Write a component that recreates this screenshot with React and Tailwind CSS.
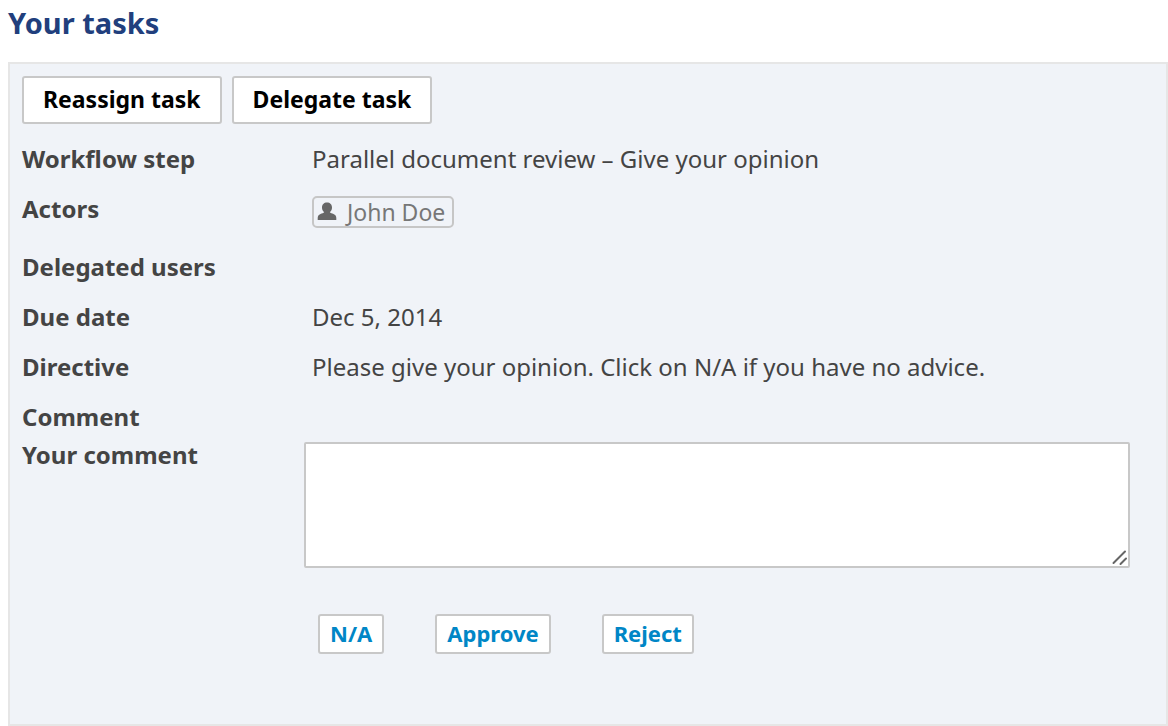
const TASK_FIELDS = [
    { label: 'Workflow step', value: 'Parallel document review – Give your opinion' },
    { label: 'Actors', user: 'John Doe' },
    { label: 'Delegated users' },
    { label: 'Due date', value: 'Dec 5, 2014' },
    { label: 'Directive', value: 'Please give your opinion. Click on N/A if you have no advice.' },
    { label: 'Comment' },
];

const TASK_ACTIONS = ['Reassign task', 'Delegate task'];

const DECISIONS = ['N/A', 'Approve', 'Reject'];

function UserIcon() {
    return (
        <svg width="20" height="20" viewBox="0 0 20 20" fill="#666666" aria-hidden="true">
            <path d="M10 .5C7 .5 5 2.600 5 5.400c0 1.900.8 3.700 2.200 4.800C6.500 11 5 11.300 3.500 11.900 1.600 12.700.7 14 .7 16v2h18.600v-2c0-2-.9-3.300-2.800-4.100-1.500-.6-3-.9-3.700-1.700C14.200 9.100 15 7.300 15 5.400 15 2.600 13 .5 10 .5z" />
        </svg>
    );
}

function UserTag({ name }) {
    return (
        <span className="inline-flex items-center gap-2.5 h-8 pl-[3px] pr-[7px] mb-0.5 border-2 border-[#c6c6c6] rounded-[5px] text-[23px] text-[#777777] align-top">
            <UserIcon />
            {name}
        </span>
    );
}

export default function App() {
    return (
        <main className="pl-2 bg-white text-[#444444] font-['Noto_Sans','Lucida_Grande',sans-serif]">
            <h1 className="pt-1 pb-5 text-[29px] leading-[38px] font-bold text-[#213f7d]">Your tasks</h1>

            <section className="border-2 border-[#e6e6e6] bg-[#f0f3f8] px-3 pt-3 pb-[70px]">
                {/* ── Task actions ── */}
                <div className="flex gap-2.5">
                    {TASK_ACTIONS.map((action) => (
                        <button
                            key={action}
                            type="button"
                            className="h-12 px-[19px] pb-0.5 border-2 border-[#c8c8c8] rounded-[3px] bg-white text-[23px] leading-[26px] font-bold text-black"
                        >
                            {action}
                        </button>
                    ))}
                </div>

                {/* ── Task details ── */}
                <dl className="mt-2.5 text-2xl leading-[26px]">
                    {TASK_FIELDS.map(({ label, value, user }) => (
                        <div key={label} className="flex py-3">
                            <dt className="w-[290px] shrink-0 font-bold">{label}</dt>
                            <dd>{user ? <UserTag name={user} /> : value}</dd>
                        </div>
                    ))}
                </dl>

                {/* ── Comment form ── */}
                <form>
                    <div className="flex pr-6">
                        <label htmlFor="comment" className="w-[282px] shrink-0 text-2xl leading-[26px] font-bold">
                            Your comment
                        </label>
                        <div className="relative flex-1">
                            <textarea
                                id="comment"
                                className="block w-full h-[126px] px-2 py-1 border-2 border-[#c8c8c8] rounded-[2px] bg-white text-2xl leading-[26px] resize-none"
                            />
                            <svg
                                className="absolute right-0.5 bottom-0.5 pointer-events-none"
                                width="16"
                                height="16"
                                viewBox="0 0 16 16"
                                stroke="#666666"
                                strokeWidth="2"
                                strokeLinecap="round"
                                aria-hidden="true"
                            >
                                <path d="M1.500 13L13 1.500M8.500 14L14 8.500" />
                            </svg>
                        </div>
                    </div>

                    <div className="flex gap-[51px] mt-[46px] ml-[296px]">
                        {DECISIONS.map((decision) => (
                            <button
                                key={decision}
                                type="button"
                                className="h-10 px-2.5 pb-0.5 border-2 border-[#c8c8c8] rounded-[3px] bg-white text-[22px] leading-[26px] font-bold text-[#0086c6]"
                            >
                                {decision}
                            </button>
                        ))}
                    </div>
                </form>
            </section>
        </main>
    );
}
